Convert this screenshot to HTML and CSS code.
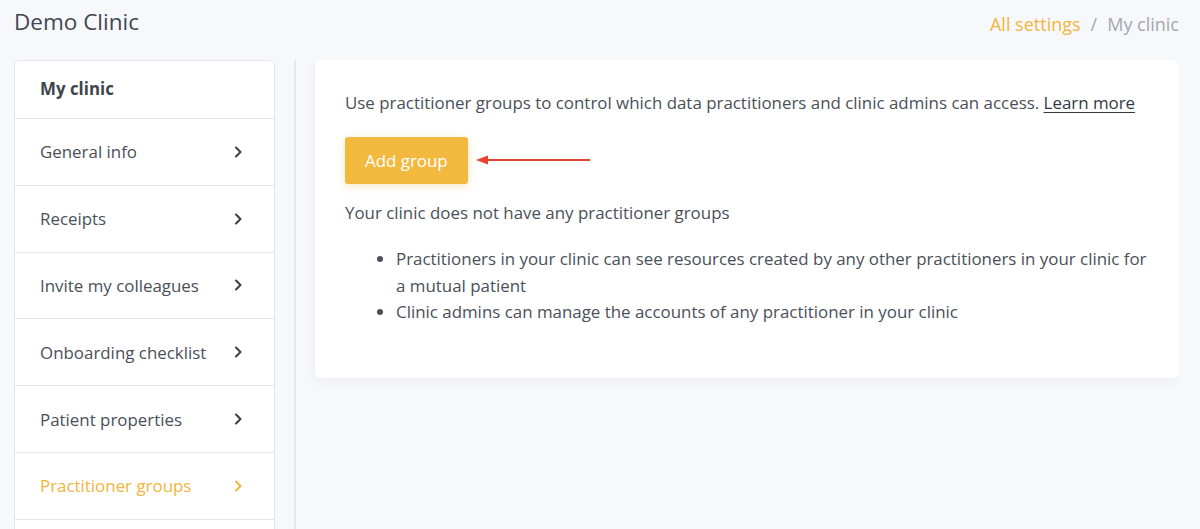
FILE: index.html
```html
<!DOCTYPE html>
<html lang="en">
<head>
    <meta charset="UTF-8">
    <meta name="viewport" content="width=device-width, initial-scale=1.0">
    <title>My clinic</title>
    <link rel="stylesheet" href="styles.css">
</head>
<body>
    <div class="top">
        <h1>Demo Clinic</h1>
        <div class="crumbs">
            <a href="#">All settings</a>
            <span class="sep">/</span>
            <span class="here">My clinic</span>
        </div>
    </div>

    <div class="layout">

        <div class="menu">
            <div class="menu-head">My clinic</div>
            <a class="menu-item" href="#">General info
                <svg class="chev" width="8" height="12" viewBox="0 0 8 12"><path d="M2 1.5 L6.5 6 L2 10.5" /></svg>
            </a>
            <a class="menu-item" href="#">Receipts
                <svg class="chev" width="8" height="12" viewBox="0 0 8 12"><path d="M2 1.5 L6.5 6 L2 10.5" /></svg>
            </a>
            <a class="menu-item" href="#">Invite my colleagues
                <svg class="chev" width="8" height="12" viewBox="0 0 8 12"><path d="M2 1.5 L6.5 6 L2 10.5" /></svg>
            </a>
            <a class="menu-item" href="#">Onboarding checklist
                <svg class="chev" width="8" height="12" viewBox="0 0 8 12"><path d="M2 1.5 L6.5 6 L2 10.5" /></svg>
            </a>
            <a class="menu-item" href="#">Patient properties
                <svg class="chev" width="8" height="12" viewBox="0 0 8 12"><path d="M2 1.5 L6.5 6 L2 10.5" /></svg>
            </a>
            <a class="menu-item active" href="#">Practitioner groups
                <svg class="chev" width="8" height="12" viewBox="0 0 8 12"><path d="M2 1.5 L6.5 6 L2 10.5" /></svg>
            </a>
            <a class="menu-item" href="#">&nbsp;</a>
        </div>

        <div class="divider"></div>

        <div class="content">
            <div class="card">
                <p>Use practitioner groups to control which data practitioners and clinic admins can access. <a class="learn" href="#">Learn more</a></p>

                <div class="action">
                    <button class="btn">Add group</button>
                    <svg class="arrow" width="116" height="12" viewBox="0 0 116 12">
                        <path d="M10 6 H114" stroke="#e8412f" stroke-width="2"/>
                        <path d="M0 6 L12 1.5 L12 10.5 Z" fill="#e8412f"/>
                    </svg>
                </div>

                <p>Your clinic does not have any practitioner groups</p>

                <ul>
                    <li>Practitioners in your clinic can see resources created by any other practitioners in your clinic for a mutual patient</li>
                    <li>Clinic admins can manage the accounts of any practitioner in your clinic</li>
                </ul>
            </div>
        </div>

    </div>
</body>
</html>
```

FILE: styles.css
```css
*{
    margin: 0;
    padding: 0;
    box-sizing: border-box;
}

body{
    font-family: "Open Sans", "Liberation Sans", sans-serif;
    font-size: 16.9px;
    color: #4a5059;
    background-color: #f7f8fb;
    padding: 0 21px 0 14px;
    height: 529px;
    overflow: hidden;
}

a{
    text-decoration: none;
    color: inherit;
}

.top{
    display: flex;
    justify-content: space-between;
    align-items: center;
    height: 44px;
    padding-bottom: 2px;
}

h1{
    font-size: 22.5px;
    font-weight: 400;
    color: #41474f;
}

.crumbs{
    font-size: 18px;
    padding-top: 6px;
    display: flex;
    gap: 10px;
}

.crumbs a{
    color: #f2b53c;
}

.sep , .here{
    color: #a3a8ae;
}

.layout{
    display: flex;
    align-items: flex-start;
    margin-top: 16px;
    height: 469px;
    overflow: hidden;
}

.menu{
    width: 261px;
    flex-shrink: 0;
    background-color: white;
    border: 1px solid #e3e7ed;
    border-radius: 4px;
}

.menu-head{
    height: 58px;
    line-height: 56px;
    padding-left: 25px;
    font-weight: 700;
    color: #3f454d;
    border-bottom: 1px solid #e3e7ed;
}

.menu-item{
    display: flex;
    justify-content: space-between;
    align-items: center;
    height: 66.8px;
    padding: 0 32px 0 25px;
    border-bottom: 1px solid #e3e7ed;
    color: #4a5059;
}

.menu-item.active{
    color: #f2b53c;
}

.chev{
    fill: none;
    stroke: #383e46;
    stroke-width: 2;
    stroke-linecap: round;
    stroke-linejoin: round;
}

.active .chev{
    stroke: #f2b53c;
}

.divider{
    width: 2px;
    align-self: stretch;
    background-color: #e5e7ec;
    margin: 0 19px 0 19px;
}

.content{
    flex: 1;
}

.card{
    background-color: white;
    border-radius: 6px;
    padding: 30px 26px 52px 30px;
    box-shadow: 0 2px 14px rgba(30, 40, 80, 0.06);
    line-height: 26.5px;
}

.learn{
    color: #333a44;
    text-decoration: underline;
    text-underline-offset: 3px;
}

.action{
    display: flex;
    align-items: center;
    gap: 8px;
    margin: 20px 0 16px 0;
}

.btn{
    font-family: inherit;
    font-size: 16.9px;
    color: white;
    background-color: #f2b93f;
    border: none;
    border-radius: 3px;
    height: 47px;
    padding: 0 20px;
    box-shadow: 0 2px 8px rgba(242, 185, 63, 0.35);
}

ul{
    margin-top: 20px;
    padding-left: 51px;
}
```
